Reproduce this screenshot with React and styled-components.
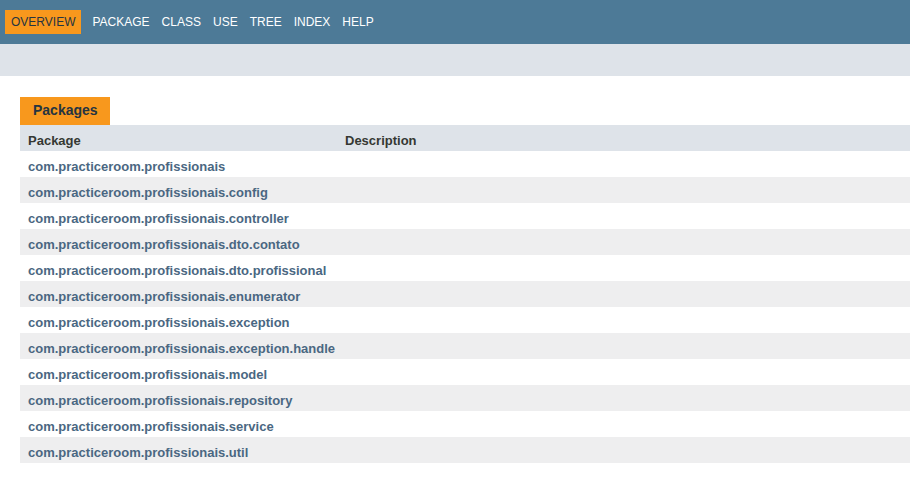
import React from "react";
import styled, { createGlobalStyle } from "styled-components";

const packages = [
  "com.practiceroom.profissionais",
  "com.practiceroom.profissionais.config",
  "com.practiceroom.profissionais.controller",
  "com.practiceroom.profissionais.dto.contato",
  "com.practiceroom.profissionais.dto.profissional",
  "com.practiceroom.profissionais.enumerator",
  "com.practiceroom.profissionais.exception",
  "com.practiceroom.profissionais.exception.handle",
  "com.practiceroom.profissionais.model",
  "com.practiceroom.profissionais.repository",
  "com.practiceroom.profissionais.service",
  "com.practiceroom.profissionais.util",
];

const navItems = ["Overview", "Package", "Class", "Use", "Tree", "Index", "Help"];

const GlobalStyle = createGlobalStyle`
  body {
    margin: 0;
    background: #fff;
    font-family: "Liberation Sans", Arial, sans-serif;
    color: #353833;
  }
`;

const TopNav = styled.div`
  background: #4d7a97;
  height: 44px;
  padding-top: 10px;
  box-sizing: border-box;
`;

const NavList = styled.ul`
  display: flex;
  margin: 0;
  padding: 0;
  list-style: none;
`;

const NavItem = styled.li`
  padding: 5px 6px;
  margin: ${(p) => (p.active ? "0 5px" : "0")};
  font-size: 12px;
  line-height: 14px;
  text-transform: uppercase;
  color: ${(p) => (p.active ? "#253441" : "#ffffff")};
  background: ${(p) => (p.active ? "#f8981d" : "transparent")};
`;

const SubNav = styled.div`
  background: #dee3e9;
  height: 32px;
`;

const Content = styled.div`
  padding: 21px 0 20px 20px;
`;

const Caption = styled.div`
  display: inline-block;
  background: #f8981d;
  color: #253441;
  font-weight: bold;
  font-size: 14px;
  line-height: 16px;
  padding: 5px 12px 7px 13px;
`;

const Row = styled.div`
  display: grid;
  grid-template-columns: 318px 1fr;
  height: 26px;
  box-sizing: border-box;
  background: ${(p) => p.bg};
`;

const HeadCell = styled.div`
  font-size: 13px;
  font-weight: bold;
  line-height: 15px;
  padding: 8px 3px 3px 8px;
  color: #353833;
`;

const DescHead = styled(HeadCell)`
  padding-left: 7px;
`;

const LinkCell = styled.a`
  font-size: 13px;
  font-weight: bold;
  line-height: 15px;
  padding: 8px 3px 3px 8px;
  color: #4a6782;
  text-decoration: none;
  white-space: nowrap;
`;

export default function App() {
  return (
    <>
      <GlobalStyle />
      <TopNav>
        <NavList>
          {navItems.map((n, i) => (
            <NavItem key={n} active={i === 0}>
              {n}
            </NavItem>
          ))}
        </NavList>
      </TopNav>
      <SubNav />
      <Content>
        <Caption>Packages</Caption>
        <Row bg="#dee3e9">
          <HeadCell>Package</HeadCell>
          <DescHead>Description</DescHead>
        </Row>
        {packages.map((p, i) => (
          <Row key={p} bg={i % 2 === 0 ? "#ffffff" : "#eeeeef"}>
            <LinkCell href="#">{p}</LinkCell>
            <div />
          </Row>
        ))}
      </Content>
    </>
  );
}
